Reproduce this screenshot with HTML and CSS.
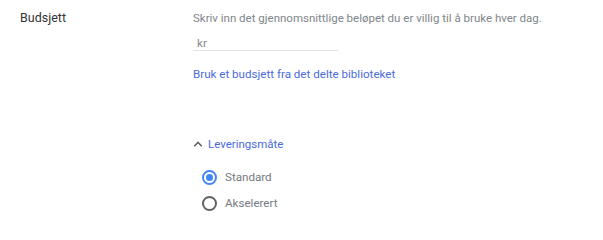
FILE: index.html
```html
<!DOCTYPE html>
<html lang="no">
<head>
<meta charset="utf-8">
<link rel="stylesheet" href="styles.css">
</head>
<body>
<div class="row">
  <div class="label">Budsjett</div>
  <div class="content">
    <div class="hint">Skriv inn det gjennomsnittlige beløpet du er villig til å bruke hver dag.</div>
    <div class="field"><span class="cur">kr</span></div>
    <a class="link" href="#">Bruk et budsjett fra det delte biblioteket</a>
    <div class="delivery">
      <div class="toggle">
        <svg class="chev" width="11" height="12" viewBox="0 0 11 12"><path d="M1.2 8.2 L5 4.4 L8.8 8.2" fill="none" stroke="#5f6368" stroke-width="1.6"/></svg>
        <span>Leveringsmåte</span>
      </div>
      <div class="options">
        <label class="opt"><span class="radio on"></span><span>Standard</span></label>
        <label class="opt"><span class="radio"></span><span>Akselerert</span></label>
      </div>
    </div>
  </div>
</div>
</body>
</html>
```
FILE: styles.css
```css
html, body { margin: 0; padding: 0; background: #fff; }
body { font-family: Roboto, "Noto Sans", sans-serif; width: 603px; height: 231px; overflow: hidden; }
.row { display: flex; padding-top: 10px; }
.label { width: 173px; padding-left: 20px; font-size: 12.5px; color: #333; line-height: 16px; }
.content { display: flex; flex-direction: column; align-items: flex-start; }
.hint { font-size: 11.5px; color: #80868b; line-height: 16px; }
.field { width: 145px; height: 25px; border-bottom: 1px solid #e3e3e3; box-sizing: border-box; padding: 6px 0 0 4px; }
.cur { font-size: 11.6px; color: #888; line-height: 16px; }
.link { margin-top: 15px; font-size: 11.6px; color: #4a6bdc; text-decoration: none; line-height: 16px; }
.delivery { margin-top: 54px; display: flex; flex-direction: column; }
.toggle { display: flex; align-items: center; gap: 4px; color: #4a6bdc; font-size: 11.5px; line-height: 16px; }
.chev { display: block; }
.options { display: flex; flex-direction: column; gap: 10px; margin-top: 17px; padding-left: 9px; }
.opt { display: flex; align-items: center; gap: 8px; font-size: 11.6px; color: #757a80; line-height: 16px; }
.radio { width: 15px; height: 15px; box-sizing: border-box; border: 2px solid #5f6368; border-radius: 50%; display: flex; align-items: center; justify-content: center; }
.radio.on { border-color: #4285f4; }
.radio.on::after { content: ""; width: 7px; height: 7px; border-radius: 50%; background: #4285f4; }
```
